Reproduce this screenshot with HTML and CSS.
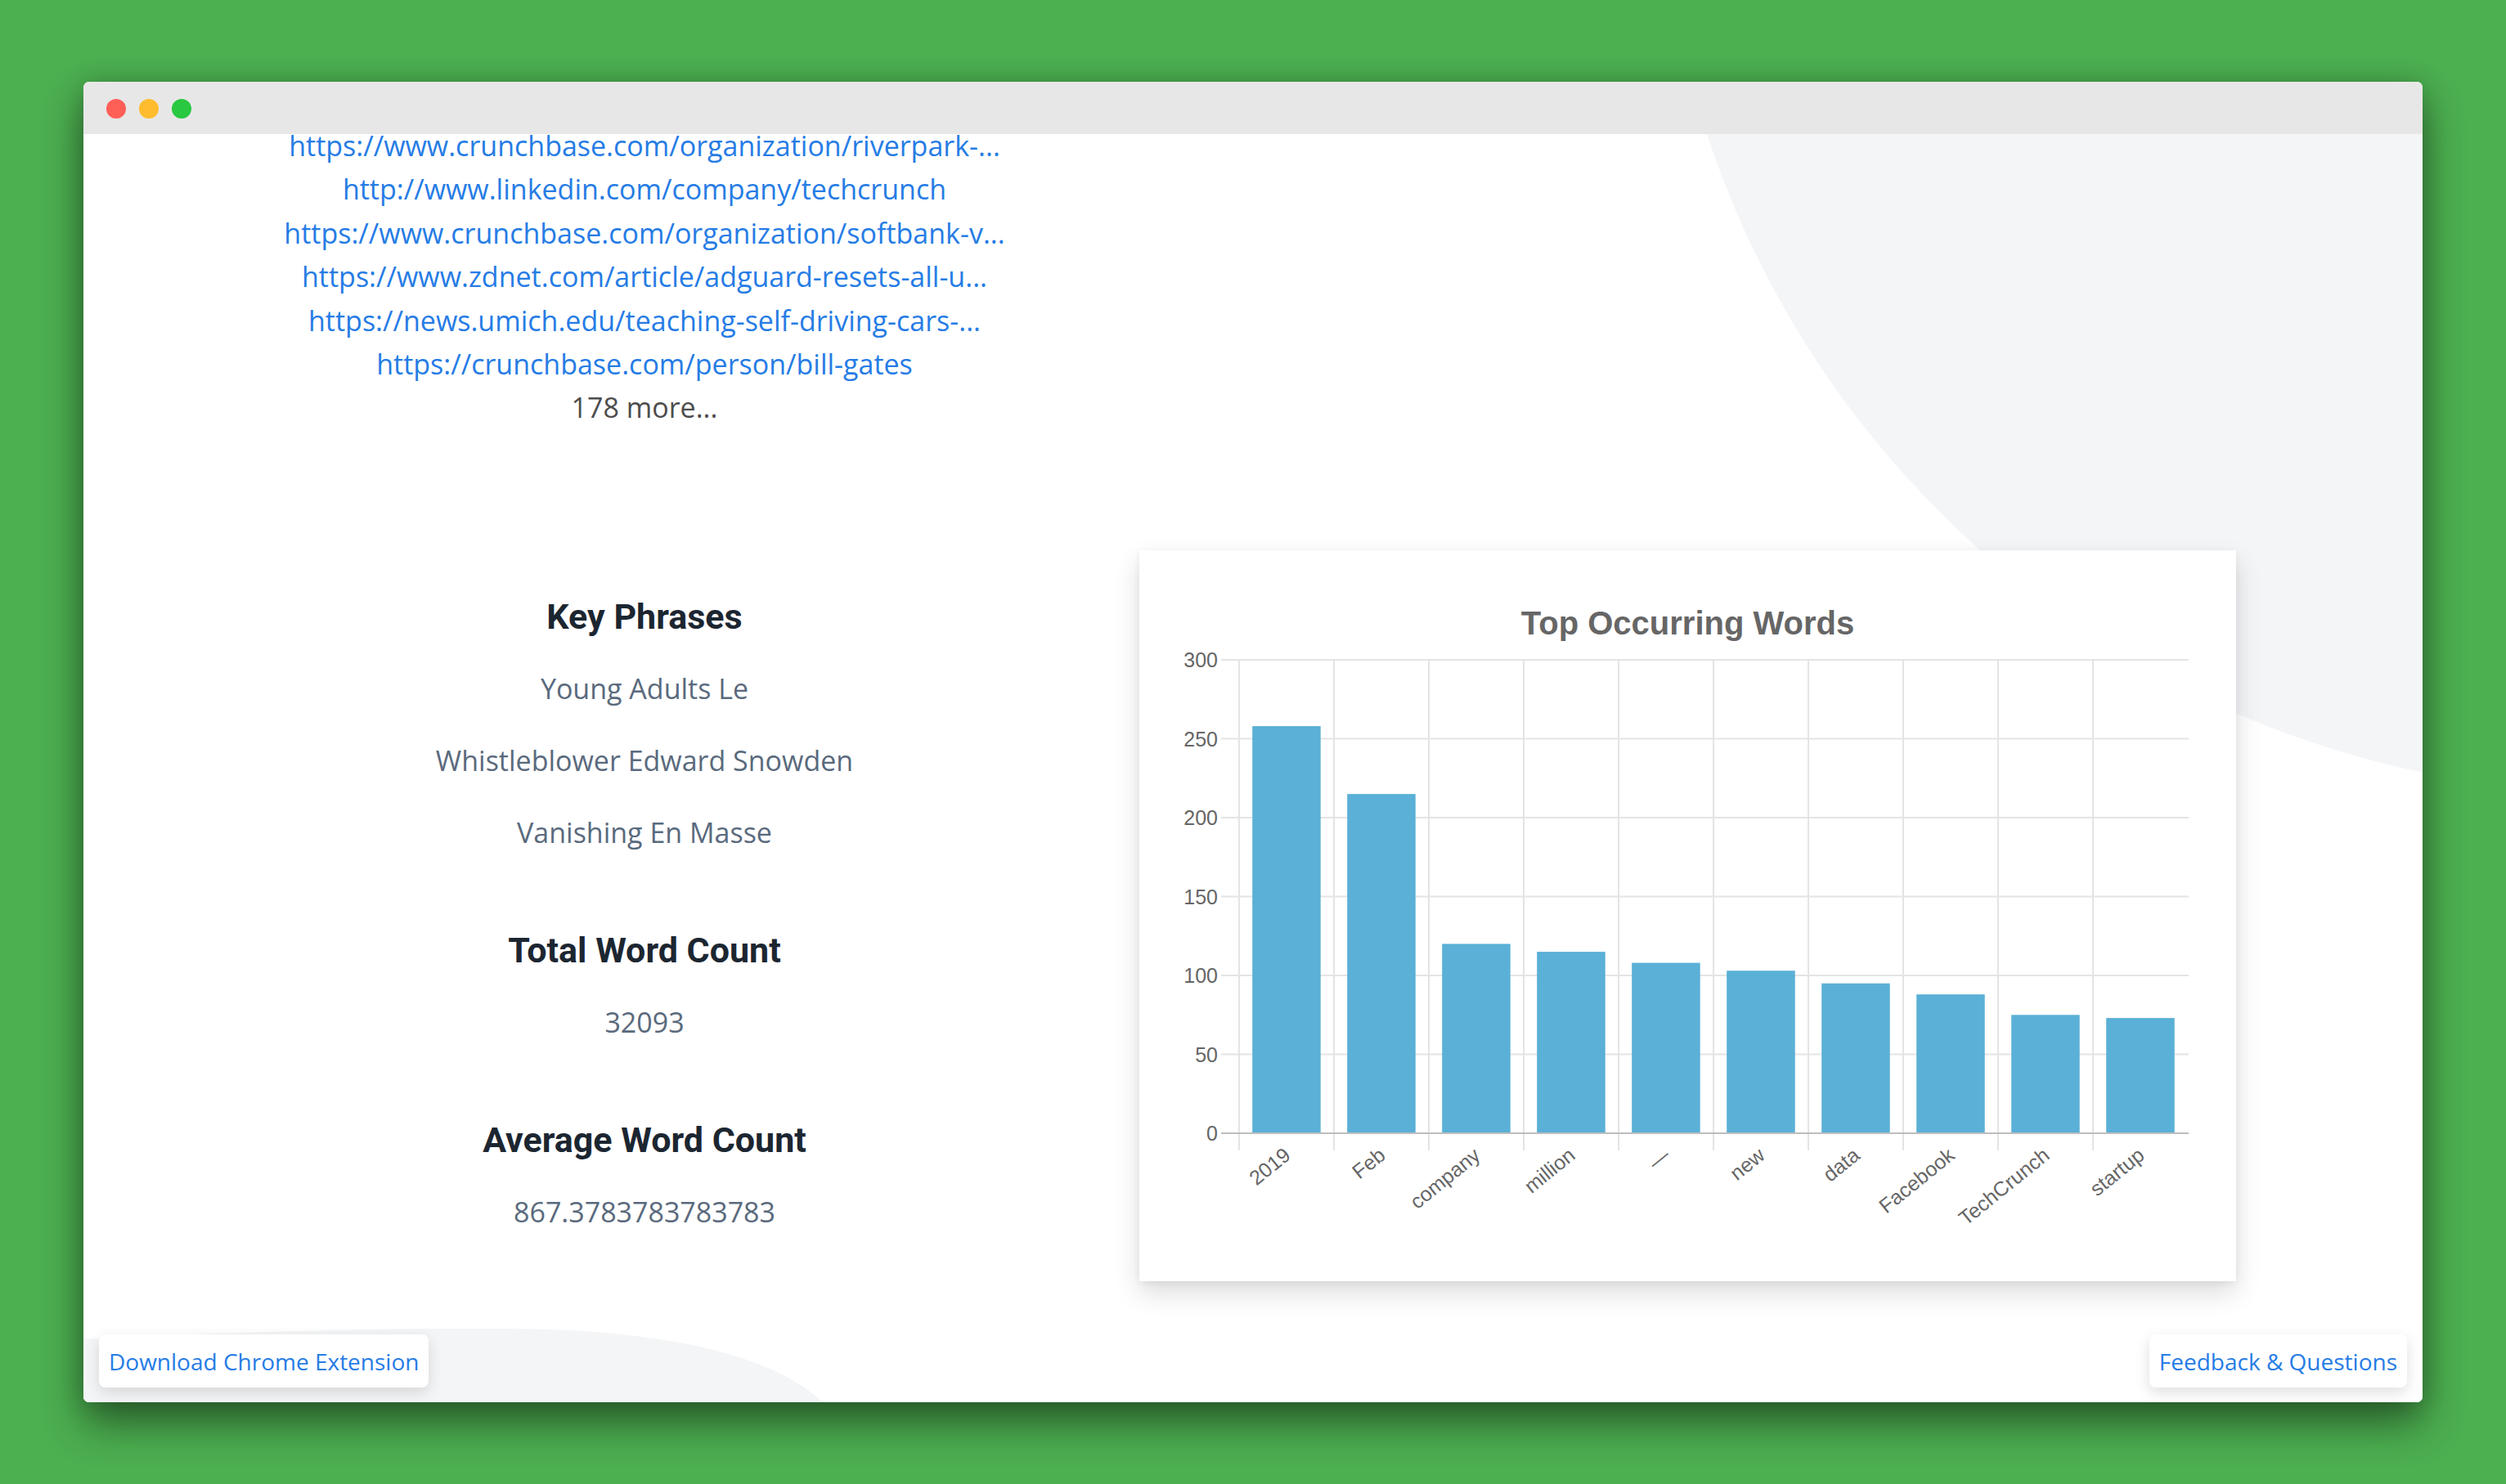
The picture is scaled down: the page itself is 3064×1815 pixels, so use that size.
FILE: index.html
```html
<!DOCTYPE html>
<html lang="en">
<head>
<meta charset="utf-8">
<title>Article Analysis</title>
<link rel="stylesheet" href="styles.css">
</head>
<body>
<div class="window">
  <div class="titlebar">
    <span class="dot dot-red"></span>
    <span class="dot dot-yellow"></span>
    <span class="dot dot-green"></span>
  </div>
  <div class="content">
    <svg class="bg-shapes" viewBox="0 0 2860 1551" preserveAspectRatio="none" aria-hidden="true">
      <circle cx="3098" cy="-367" r="1172" fill="#f4f5f7"/>
      <path d="M0,1474 C150,1466 350,1460 520,1461 C700,1462 840,1490 904,1551 L0,1551 Z" fill="#f4f5f7"/>
    </svg>
    <main class="page">
      <div class="links">
        <a class="link" href="#">https://www.crunchbase.com/organization/riverpark-...</a>
        <a class="link" href="#">http://www.linkedin.com/company/techcrunch</a>
        <a class="link" href="#">https://www.crunchbase.com/organization/softbank-v...</a>
        <a class="link" href="#">https://www.zdnet.com/article/adguard-resets-all-u...</a>
        <a class="link" href="#">https://news.umich.edu/teaching-self-driving-cars-...</a>
        <a class="link" href="#">https://crunchbase.com/person/bill-gates</a>
        <span class="more">178 more...</span>
      </div>
      <section class="row">
        <div class="stats">
          <div class="stat">
            <h2 class="stat-title">Key Phrases</h2>
            <p class="stat-value">Young Adults Le</p>
            <p class="stat-value">Whistleblower Edward Snowden</p>
            <p class="stat-value">Vanishing En Masse</p>
          </div>
          <div class="stat">
            <h2 class="stat-title">Total Word Count</h2>
            <p class="stat-value">32093</p>
          </div>
          <div class="stat">
            <h2 class="stat-title">Average Word Count</h2>
            <p class="stat-value">867.3783783783783</p>
          </div>
        </div>
        <div class="card">
          <svg class="chart" viewBox="0 0 1341 894" width="1341" height="894">
            <text class="chart-title" x="670.5" y="103" text-anchor="middle">Top Occurring Words</text>
            <g class="grid">
              <line x1="100" y1="134" x2="1283" y2="134"/>
              <line x1="100" y1="230.5" x2="1283" y2="230.5"/>
              <line x1="100" y1="327" x2="1283" y2="327"/>
              <line x1="100" y1="423.5" x2="1283" y2="423.5"/>
              <line x1="100" y1="520" x2="1283" y2="520"/>
              <line x1="100" y1="616.5" x2="1283" y2="616.5"/>
              <line x1="122" y1="134" x2="122" y2="734"/>
              <line x1="238" y1="134" x2="238" y2="734"/>
              <line x1="354" y1="134" x2="354" y2="734"/>
              <line x1="470" y1="134" x2="470" y2="734"/>
              <line x1="586" y1="134" x2="586" y2="734"/>
              <line x1="702" y1="134" x2="702" y2="734"/>
              <line x1="818" y1="134" x2="818" y2="734"/>
              <line x1="934" y1="134" x2="934" y2="734"/>
              <line x1="1050" y1="134" x2="1050" y2="734"/>
              <line x1="1166" y1="134" x2="1166" y2="734"/>
            </g>
            <g class="bars">
              <rect x="138.2" y="215.1" width="83.5" height="497.9"/>
              <rect x="254.2" y="298.1" width="83.5" height="414.9"/>
              <rect x="370.2" y="481.4" width="83.5" height="231.6"/>
              <rect x="486.2" y="491.1" width="83.5" height="221.9"/>
              <rect x="602.2" y="504.6" width="83.5" height="208.4"/>
              <rect x="718.2" y="514.2" width="83.5" height="198.8"/>
              <rect x="834.2" y="529.7" width="83.5" height="183.3"/>
              <rect x="950.2" y="543.2" width="83.5" height="169.8"/>
              <rect x="1066.2" y="568.3" width="83.5" height="144.7"/>
              <rect x="1182.2" y="572.1" width="83.5" height="140.9"/>
            </g>
            <line class="zero-line" x1="100" y1="713" x2="1283" y2="713"/>
            <g class="y-labels" text-anchor="end">
              <text x="96" y="143">300</text>
              <text x="96" y="239.5">250</text>
              <text x="96" y="336">200</text>
              <text x="96" y="432.5">150</text>
              <text x="96" y="529">100</text>
              <text x="96" y="625.5">50</text>
              <text x="96" y="722">0</text>
            </g>
            <g class="x-labels" text-anchor="end">
              <text transform="translate(181 736) rotate(-39)" dy="0.35em">2019</text>
              <text transform="translate(297 736) rotate(-39)" dy="0.35em">Feb</text>
              <text transform="translate(413 736) rotate(-39)" dy="0.35em">company</text>
              <text transform="translate(529 736) rotate(-39)" dy="0.35em">million</text>
              <text transform="translate(645 736) rotate(-39)" dy="0.35em">—</text>
              <text transform="translate(761 736) rotate(-39)" dy="0.35em">new</text>
              <text transform="translate(877 736) rotate(-39)" dy="0.35em">data</text>
              <text transform="translate(993 736) rotate(-39)" dy="0.35em">Facebook</text>
              <text transform="translate(1109 736) rotate(-39)" dy="0.35em">TechCrunch</text>
              <text transform="translate(1225 736) rotate(-39)" dy="0.35em">startup</text>
            </g>
          </svg>
        </div>
      </section>
    </main>
    <a class="float-btn float-btn-left" href="#">Download Chrome Extension</a>
    <a class="float-btn float-btn-right" href="#">Feedback &amp; Questions</a>
  </div>
</div>
</body>
</html>
```
FILE: styles.css
```css
* {
  box-sizing: border-box;
}

html, body {
  margin: 0;
  height: 100%;
}

body {
  background: #4caf50;
  padding: 100px 102px 0 102px;
  overflow: hidden;
  font-family: "Open Sans", "Liberation Sans", sans-serif;
}

.window {
  width: 2860px;
  height: 1615px;
  border-radius: 7px;
  overflow: hidden;
  background: #ffffff;
  box-shadow: 0 26px 50px rgba(0, 0, 0, 0.45), 0 0 30px rgba(0, 0, 0, 0.18);
  display: flex;
  flex-direction: column;
}

.titlebar {
  height: 64px;
  flex: 0 0 64px;
  background: #e7e7e7;
  display: flex;
  align-items: center;
  gap: 16px;
  padding: 2px 0 0 28px;
}

.dot {
  width: 24px;
  height: 24px;
  border-radius: 50%;
  display: block;
}

.dot-red { background: #fe5f57; }
.dot-yellow { background: #febc2e; }
.dot-green { background: #28c840; }

.content {
  position: relative;
  flex: 1;
  overflow: hidden;
  background: #ffffff;
}

.bg-shapes {
  position: absolute;
  left: 0;
  top: 0;
  width: 2860px;
  height: 1551px;
}

.page {
  position: relative;
  padding-left: 96px;
}

.links {
  width: 1180px;
  margin-top: -12px;
  display: flex;
  flex-direction: column;
  align-items: center;
  font-size: 34px;
  line-height: 53.4px;
}

.link {
  color: #267ce5;
  text-decoration: none;
  white-space: nowrap;
}

.more {
  color: #4d4d4d;
}

.row {
  margin-top: 147px;
  display: grid;
  grid-template-columns: 1180px 1341px;
  column-gap: 15px;
  align-items: start;
}

.stats {
  padding-top: 37px;
  display: flex;
  flex-direction: column;
  gap: 56px;
  text-align: center;
}

.stat-title {
  margin: 0;
  font-family: Roboto, "Liberation Sans", sans-serif;
  font-weight: 700;
  font-size: 43px;
  line-height: 88px;
  color: #1c2631;
}

.stat-value {
  margin: 0;
  font-size: 34px;
  line-height: 88px;
  color: #5a6a7d;
}

.card {
  width: 1341px;
  height: 894px;
  background: #ffffff;
  box-shadow: 0 14px 30px rgba(0, 0, 0, 0.14), 0 2px 8px rgba(0, 0, 0, 0.06);
}

.chart {
  display: block;
  font-family: "Liberation Sans", Arial, sans-serif;
}

.chart-title {
  font-size: 40px;
  font-weight: 700;
  fill: #666666;
}

.grid line {
  stroke: #e4e4e4;
  stroke-width: 2;
}

.zero-line {
  stroke: #bdbdbd;
  stroke-width: 2;
}

.bars rect {
  fill: #5ab0d6;
}

.y-labels text,
.x-labels text {
  font-size: 25px;
  fill: #666666;
}

.float-btn {
  position: absolute;
  bottom: 18px;
  height: 65px;
  padding: 0 12px;
  display: flex;
  align-items: center;
  background: #ffffff;
  border-radius: 8px;
  box-shadow: 0 6px 18px rgba(0, 0, 0, 0.13);
  color: #267ce5;
  font-size: 28px;
  text-decoration: none;
  white-space: nowrap;
}

.float-btn-left {
  left: 19px;
}

.float-btn-right {
  right: 19px;
}
```
